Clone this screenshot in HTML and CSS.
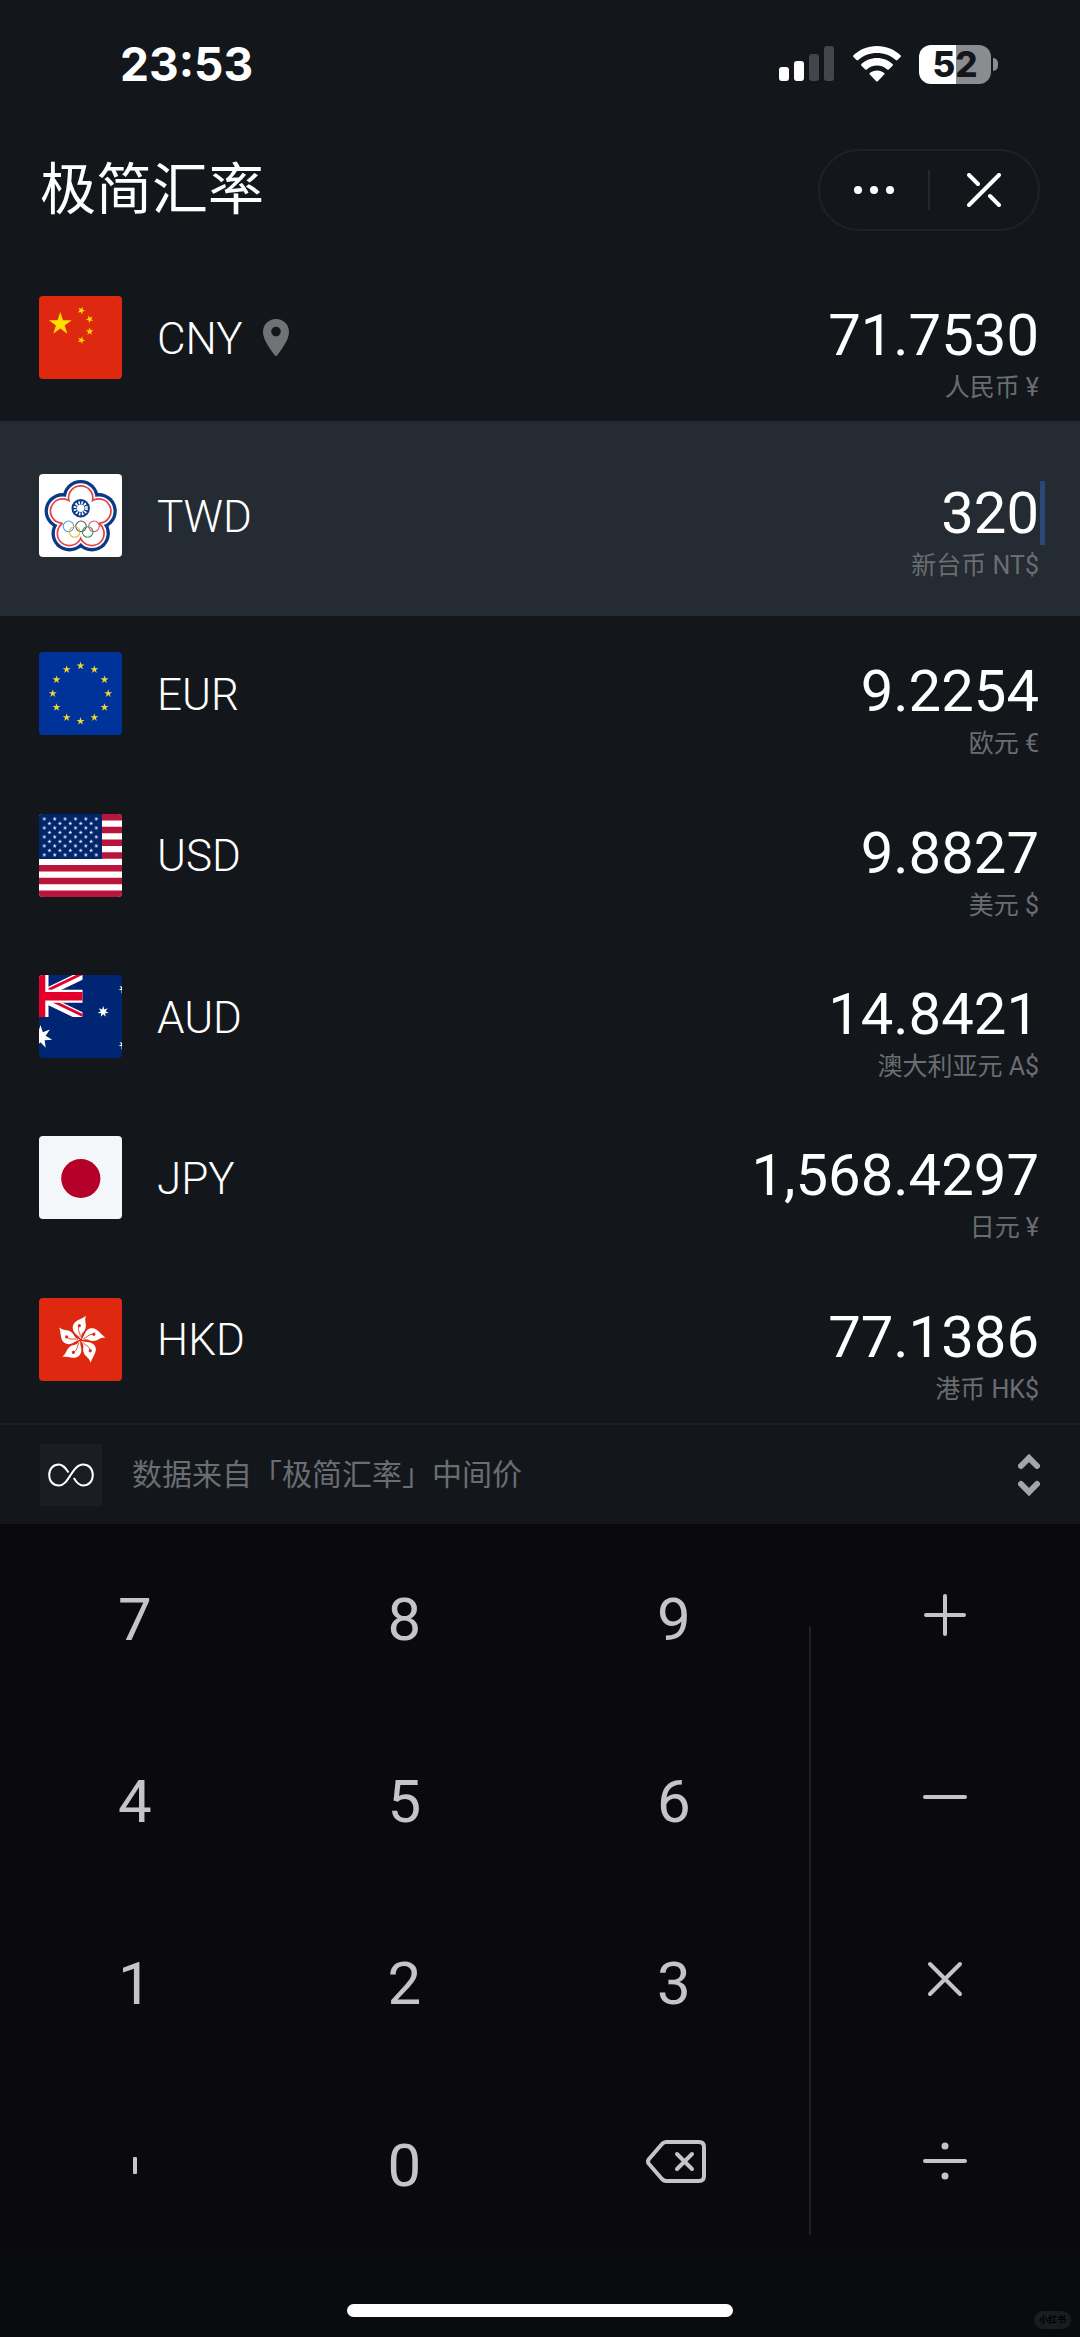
FILE: index.html
```html
<!DOCTYPE html>
<html lang="zh-CN">
<head>
<meta charset="utf-8">
<meta name="viewport" content="width=device-width, initial-scale=1">
<title>极简汇率</title>
<link rel="stylesheet" href="styles.css">
</head>
<body>
<svg class="defs" aria-hidden="true">
  <symbol id="star5" viewBox="-1 -1 2 2" overflow="visible"><path d="M0-1 .2245-.309 .951-.309 .363.118 .588.809 0 .382-.588.809-.363.118-.951-.309-.2245-.309Z"/></symbol>
  <symbol id="star7" viewBox="-1 -1 2 2" overflow="visible"><path d="M0-1 .191-.396 .782-.623 .429-.098 .975.223 .344.274 .434.901 0 .44-.434.901-.344.274-.975.223-.429-.098-.782-.623-.191-.396Z"/></symbol>
</svg>

<header class="top">
  <div class="status">
    <span class="clock">23:53</span>
    <div class="status-icons">
      <svg class="signal" viewBox="0 0 56 36" aria-label="信号"><g fill="#fff"><rect x="0" y="21" width="10" height="14" rx="3"/><rect x="15" y="15" width="10" height="20" rx="3"/></g><g fill="#43464a"><rect x="30" y="8" width="10" height="27" rx="3"/><rect x="45" y="0" width="10" height="35" rx="3"/></g></svg>
      <svg class="wifi" viewBox="0 0 48 36" aria-label="无线网络"><g fill="#fff"><path d="M24 0C14.800 0 6.400 3.600.500 9.300Q-.300 10.200.500 11.100L3.500 14.100Q4.300 14.900 5.200 14.100C10.200 9.600 16.800 7 24 7S37.800 9.600 42.800 14.100Q43.700 14.900 44.500 14.100L47.500 11.100Q48.300 10.200 47.500 9.300C41.600 3.600 33.200 0 24 0Z"/><path d="M24 12C18 12 12.500 14.300 8.400 18.100Q7.600 18.900 8.400 19.700L12.200 23.500Q13 24.200 13.800 23.500C16.500 21 20 19.500 24 19.500S31.500 21 34.200 23.500Q35 24.200 35.800 23.500L39.600 19.700Q40.400 18.900 39.600 18.100C35.500 14.300 30 12 24 12Z"/><path d="M24 24.500C21.200 24.500 18.700 25.500 16.800 27.100Q16 27.800 16.800 28.600L23.200 35.200Q24 36 24.800 35.200L31.200 28.600Q32 27.800 31.200 27.100C29.300 25.500 26.800 24.500 24 24.500Z"/></g></svg>
      <span class="battery"><span class="battery-body">52</span><span class="battery-cap"></span></span>
    </div>
  </div>
  <div class="titlebar">
    <h1>极简汇率</h1>
    <div class="capsule">
      <button type="button" aria-label="更多"><svg width="40" height="34" viewBox="0 0 40 34"><g fill="#fff"><circle cx="4" cy="17" r="4"/><circle cx="20" cy="17" r="4"/><circle cx="36" cy="17" r="4"/></g></svg></button>
      <span class="capsule-line"></span>
      <button type="button" aria-label="关闭"><svg width="34" height="34" viewBox="0 0 34 34"><path d="M2 32 32 2M2 2l9 9M23 23l9 9" fill="none" stroke="#fff" stroke-width="4" stroke-linecap="round"/></svg></button>
    </div>
  </div>
</header>

<main class="rates">
  <section class="row">
    <svg class="flag" viewBox="0 0 83 83"><rect width="83" height="83" fill="#de2910"/><g fill="#ffde00"><use href="#star5" x="9.300" y="16" width="24" height="24"/><use href="#star5" x="-4" y="-4" width="8" height="8" transform="translate(42.300 14.500) rotate(24)"/><use href="#star5" x="-4" y="-4" width="8" height="8" transform="translate(50.700 23.200) rotate(46)"/><use href="#star5" x="-4" y="-4" width="8" height="8" transform="translate(50.700 35.500) rotate(0)"/><use href="#star5" x="-4" y="-4" width="8" height="8" transform="translate(42.300 44.200) rotate(22)"/></g></svg>
    <span class="code">CNY</span>
    <svg class="pin" viewBox="0 0 26 37" aria-label="当前位置"><path fill="#707376" fill-rule="evenodd" d="M13 0C5.500 0 0 5.700 0 12.700C0 21 7 29.500 11.700 36.200Q13 37.800 14.300 36.200C19 29.500 26 21 26 12.700C26 5.700 20.500 0 13 0ZM13 7.800A4.800 4.800 0 1 1 13 17.400A4.800 4.800 0 1 1 13 7.800Z"/></svg>
    <div class="value"><span class="amount">71.7530</span><span class="unit">人民币 ¥</span></div>
  </section>

  <section class="row active">
    <svg class="flag" viewBox="0 0 83 83"><rect width="83" height="83" fill="#fff"/>
      <g fill="#0a3a86"><circle cx="41.700" cy="24" r="18"/><circle cx="59.800" cy="37.100" r="18"/><circle cx="52.900" cy="59.400" r="18"/><circle cx="30.500" cy="59.400" r="18"/><circle cx="23.600" cy="37.100" r="18"/></g>
      <g fill="#fff"><circle cx="41.700" cy="24" r="14.700"/><circle cx="59.800" cy="37.100" r="14.700"/><circle cx="52.900" cy="59.400" r="14.700"/><circle cx="30.500" cy="59.400" r="14.700"/><circle cx="23.600" cy="37.100" r="14.700"/></g>
      <g fill="#e04046"><circle cx="41.700" cy="24" r="13"/><circle cx="59.800" cy="37.100" r="13"/><circle cx="52.900" cy="59.400" r="13"/><circle cx="30.500" cy="59.400" r="13"/><circle cx="23.600" cy="37.100" r="13"/></g>
      <g fill="#fff"><circle cx="41.700" cy="24" r="11.300"/><circle cx="59.800" cy="37.100" r="11.300"/><circle cx="52.900" cy="59.400" r="11.300"/><circle cx="30.500" cy="59.400" r="11.300"/><circle cx="23.600" cy="37.100" r="11.300"/><circle cx="41.700" cy="43.500" r="19"/></g>
      <circle cx="41.700" cy="34.300" r="9.200" fill="#0a3a86"/><circle cx="41.700" cy="34.300" r="3.700" fill="#fff"/><circle cx="41.700" cy="34.300" r="5.700" fill="none" stroke="#fff" stroke-width="3" stroke-dasharray="1.600 1.384"/>
      <g fill="none" stroke-width="1.100"><circle cx="29.500" cy="52.300" r="5.300" stroke="#4aa3d8"/><circle cx="42" cy="52.300" r="5.300" stroke="#555"/><circle cx="55" cy="52.300" r="5.300" stroke="#e04a6c"/><circle cx="35.700" cy="58" r="5.300" stroke="#e8b93a"/><circle cx="48.700" cy="58" r="5.300" stroke="#3a9a5b"/></g>
    </svg>
    <label class="code" for="twd">TWD</label>
    <div class="value"><span class="entry"><input class="amount" id="twd" type="text" inputmode="decimal" value="320"><span class="caret"></span></span><span class="unit">新台币 NT$</span></div>
  </section>

  <section class="row">
    <svg class="flag" viewBox="-41.500 -41.500 83 83"><rect x="-42" y="-42" width="84" height="84" fill="#039"/><g fill="#f3d32f"><use href="#star5" x="-4.200" y="-31.900" width="8.400" height="8.400"/><use href="#star5" x="9.650" y="-28.200" width="8.400" height="8.400"/><use href="#star5" x="19.800" y="-18.050" width="8.400" height="8.400"/><use href="#star5" x="23.500" y="-4.200" width="8.400" height="8.400"/><use href="#star5" x="19.800" y="9.650" width="8.400" height="8.400"/><use href="#star5" x="9.650" y="19.800" width="8.400" height="8.400"/><use href="#star5" x="-4.200" y="23.500" width="8.400" height="8.400"/><use href="#star5" x="-18.050" y="19.800" width="8.400" height="8.400"/><use href="#star5" x="-28.200" y="9.650" width="8.400" height="8.400"/><use href="#star5" x="-31.900" y="-4.200" width="8.400" height="8.400"/><use href="#star5" x="-28.200" y="-18.050" width="8.400" height="8.400"/><use href="#star5" x="-18.050" y="-28.200" width="8.400" height="8.400"/></g></svg>
    <span class="code">EUR</span>
    <div class="value"><span class="amount">9.2254</span><span class="unit">欧元 €</span></div>
  </section>

  <section class="row">
    <svg class="flag" viewBox="0 0 83 83"><defs><pattern id="us-stars" x="2.700" y="2.750" width="10.400" height="9" patternUnits="userSpaceOnUse"><g fill="#fff"><use href="#star5" x=".400" y="0" width="4.400" height="4.400"/><use href="#star5" x="5.600" y="4.500" width="4.400" height="4.400"/></g></pattern></defs><rect width="83" height="83" fill="#fff"/><path d="M0 3.200H83M0 16H83M0 28.700H83M0 41.500H83M0 54.300H83M0 67H83M0 79.800H83" stroke="#b8143c" stroke-width="6.400"/><rect width="63" height="45" fill="#00256b"/><rect x="2.700" y="2.750" width="57.200" height="40.500" fill="url(#us-stars)"/></svg>
    <span class="code">USD</span>
    <div class="value"><span class="amount">9.8827</span><span class="unit">美元 $</span></div>
  </section>

  <section class="row">
    <svg class="flag" viewBox="0 0 83 83"><defs><clipPath id="jack"><rect width="43.500" height="42"/></clipPath></defs><rect width="83" height="83" fill="#002673"/><g clip-path="url(#jack)"><path d="M0 21 46-1.200M0 21 46 43.200" stroke="#fff" stroke-width="8.400"/><path d="M0 19.400 46-2.800M0 19.400 46 41.600" stroke="#e4002b" stroke-width="2.800"/><path d="M0 21.300H44M3 0V42" stroke="#fff" stroke-width="13"/><path d="M0 21.300H44" stroke="#e4002b" stroke-width="8.400"/><path d="M3 0V42" stroke="#e4002b" stroke-width="6.600"/></g><g fill="#fff"><use href="#star7" x="-10.500" y="50" width="24" height="24"/><use href="#star7" x="58.500" y="31" width="11.400" height="11.400"/><use href="#star7" x="79.500" y="9" width="10" height="10"/><use href="#star7" x="79.500" y="65" width="10" height="10"/></g></svg>
    <span class="code">AUD</span>
    <div class="value"><span class="amount">14.8421</span><span class="unit">澳大利亚元 A$</span></div>
  </section>

  <section class="row">
    <svg class="flag" viewBox="0 0 83 83"><rect width="83" height="83" fill="#f4f7fa"/><circle cx="41.800" cy="42.500" r="19.600" fill="#b5002a"/></svg>
    <span class="code">JPY</span>
    <div class="value"><span class="amount">1,568.4297</span><span class="unit">日元 ¥</span></div>
  </section>

  <section class="row">
    <svg class="flag" viewBox="0 0 83 83"><defs><g id="petal"><path fill="#fff" d="M-.500-1.500C-2.500-5-8.500-7-8-13C-7.300-19.500-.500-20 5.300-24.300C3.200-19 6.300-16.500 4.800-11.500C3.500-7.500-.300-7 .500-1.500Z"/><path d="M-.500-3C0-7-3.500-9-1.700-13.500" fill="none" stroke="#de2910" stroke-width=".800"/><circle cx="-1.400" cy="-14.300" r="1.600" fill="#de2910"/></g></defs><rect width="83" height="83" fill="#de2910"/><g transform="translate(41.700 42)"><use href="#petal"/><use href="#petal" transform="rotate(72)"/><use href="#petal" transform="rotate(144)"/><use href="#petal" transform="rotate(216)"/><use href="#petal" transform="rotate(288)"/></g></svg>
    <span class="code">HKD</span>
    <div class="value"><span class="amount">77.1386</span><span class="unit">港币 HK$</span></div>
  </section>
</main>

<div class="source">
  <span class="logo"><svg width="46" height="24" viewBox="0 0 46 24"><path d="M20.500 9.500C17.500 5 15 1.500 11 1.500C5 1.500 1.200 6 1.200 12S5 22.500 11 22.500C21 22.500 24 1.500 35 1.500C41 1.500 44.800 6 44.800 12S41 22.500 35 22.500C31 22.500 28.500 19.500 25.800 15" fill="none" stroke="#fff" stroke-width="2"/></svg></span>
  <p>数据来自「极简汇率」中间价</p>
  <button type="button" class="toggle" aria-label="切换数据来源"><svg width="22" height="42" viewBox="0 0 22 42"><path d="M3 12l8-8 8 8M3 30l8 8 8-8" fill="none" stroke="#a3a6aa" stroke-width="6" stroke-linecap="round" stroke-linejoin="miter"/></svg></button>
</div>

<div class="keypad">
  <div class="digits">
    <button type="button">7</button><button type="button">8</button><button type="button">9</button>
    <button type="button">4</button><button type="button">5</button><button type="button">6</button>
    <button type="button">1</button><button type="button">2</button><button type="button">3</button>
    <button type="button" aria-label="小数点"><svg width="4" height="17" viewBox="0 0 4 17"><rect width="4" height="17" rx="1" fill="#c5c4c9"/></svg></button><button type="button">0</button>
    <button type="button" class="erase" aria-label="删除"><svg width="60" height="43" viewBox="0 0 60 43"><g fill="none" stroke="#c5c4c9" stroke-width="4" stroke-linecap="round" stroke-linejoin="round"><path d="M20 2H53Q58 2 58 7V36Q58 41 53 41H20Q18 41 16 39L3 24Q1 21.500 3 19L16 4Q18 2 20 2Z"/><path d="M31 14 46 29M46 14 31 29"/></g></svg></button>
  </div>
  <div class="divider"></div>
  <div class="ops">
    <button type="button" aria-label="加"><svg width="46" height="46" viewBox="0 0 46 46"><path d="M4 23H42M23 4V42"/></svg></button>
    <button type="button" aria-label="减"><svg width="46" height="46" viewBox="0 0 46 46"><path d="M3 23H43"/></svg></button>
    <button type="button" aria-label="乘"><svg width="46" height="46" viewBox="0 0 46 46"><path d="M8 8 38 38M38 8 8 38"/></svg></button>
    <button type="button" aria-label="除"><svg width="46" height="46" viewBox="0 0 46 46"><path d="M3 23H43"/><circle cx="23" cy="8" r="3.500"/><circle cx="23" cy="38" r="3.500"/></svg></button>
  </div>
</div>
<footer class="home"><span class="home-bar"></span><span class="badge">小红书</span></footer>
</body>
</html>
```
FILE: styles.css
```css
* { box-sizing: border-box; margin: 0; }

body {
  min-height: 100vh;
  display: flex;
  flex-direction: column;
  background: #13171b;
  color: #fff;
  font-family: Roboto, "Noto Sans CJK SC", sans-serif;
  font-weight: 400;
}

button {
  padding: 0;
  border: 0;
  background: none;
  color: inherit;
  font: inherit;
  display: flex;
  align-items: center;
  justify-content: center;
}

svg { display: block; flex: none; }

.defs { position: absolute; width: 0; height: 0; }

/* Status bar and title */
.status {
  display: flex;
  align-items: center;
  justify-content: space-between;
  height: 128px;
  padding: 0 82px 0 120px;
}

.clock { font: 700 46px/60px Inter, sans-serif; }

.status-icons { display: flex; align-items: center; gap: 18px; }

.signal { width: 56px; height: 36px; }
.wifi { width: 48px; height: 36px; }

.battery { display: flex; align-items: center; gap: 2px; }

.battery-body {
  width: 72px;
  height: 39px;
  border-radius: 12px;
  background: linear-gradient(90deg, #fff 52%, #8b8c8f 52%);
  color: #13171b;
  font: 800 35px/39px Inter, sans-serif;
  text-align: center;
}

.battery-cap {
  width: 5px;
  height: 13px;
  border-radius: 0 6px 6px 0;
  background: #8b8c8f;
}

.titlebar {
  display: flex;
  align-items: center;
  justify-content: space-between;
  height: 132px;
  padding: 0 40px 8px;
}

h1 { margin-bottom: 10px; font: 400 56px/80px "Noto Sans CJK SC", sans-serif; }

.capsule {
  display: flex;
  align-items: center;
  width: 222px;
  height: 82px;
  border: 2px solid #1e2226;
  border-radius: 41px;
}

.capsule button { flex: 1; height: 100%; }
.capsule-line { width: 2px; height: 40px; background: #25292d; }

/* Currency list */
.rates { flex: 1; display: flex; flex-direction: column; }

.row {
  flex: 1 0 150px;
  display: flex;
  align-items: center;
  padding: 0 41px 0 39px;
}

.row.active { flex: 0 0 195px; background: #252b33; }

.flag {
  width: 83px;
  height: 83px;
  margin-bottom: 6px;
  border-radius: 4px;
}

.code {
  margin: 0 0 4px 35px;
  font-size: 44px;
  font-weight: 300;
  line-height: 60px;
}

.pin { width: 26px; height: 37px; margin: 0 0 6px 20px; }

.value {
  flex: 1;
  padding-top: 27px;
  display: flex;
  flex-direction: column;
  align-items: flex-end;
  gap: 8px;
}

.amount {
  display: block;
  font-size: 58px;
  line-height: 60px;
}

.entry { position: relative; display: block; }

input.amount {
  width: 300px;
  height: 60px;
  padding: 0;
  border: 0;
  outline: 0;
  background: none;
  color: inherit;
  font-family: inherit;
  font-weight: inherit;
  text-align: right;
}

.caret {
  position: absolute;
  right: -6px;
  top: -2px;
  width: 5px;
  height: 64px;
  background: #2c4677;
}

.unit { font-size: 25px; line-height: 30px; color: #6a6d71; }

/* Data source bar */
.source {
  display: flex;
  align-items: center;
  height: 101px;
  padding: 0 40px;
  border-top: 2px solid #1b1f24;
}

.logo {
  display: flex;
  align-items: center;
  justify-content: center;
  width: 62px;
  height: 62px;
  background: #1a1e23;
}

.source p { flex: 1; margin-left: 30px; font-size: 30px; line-height: 40px; color: #6a6d71; }

.toggle { width: 22px; height: 60px; }

/* Keypad */
.keypad {
  display: flex;
  height: 728px;
  background: #0a0a0e;
  color: #c5c4c9;
  font-size: 60px;
}

.digits {
  flex: 3;
  display: grid;
  grid-template-columns: repeat(3, 1fr);
  grid-auto-rows: 1fr;
}

.digits button { padding-top: 8px; }
.digits .erase { padding: 0 0 0 5px; }

.divider { width: 2px; margin: 102px 0 17px; background: #202125; }

.ops { flex: 1; display: grid; grid-auto-rows: 1fr; }

.ops path { fill: none; stroke: #c5c4c9; stroke-width: 4; stroke-linecap: round; }
.ops circle { fill: #c5c4c9; }

.home {
  position: relative;
  display: flex;
  justify-content: center;
  align-items: flex-end;
  height: 85px;
  padding-bottom: 20px;
  background: #0a0b0e;
}

.home-bar { width: 386px; height: 13px; border-radius: 7px; background: #fff; }

.badge {
  position: absolute;
  right: 9px;
  bottom: 8px;
  width: 37px;
  height: 18px;
  border-radius: 9px;
  background: #1b1c1f;
  color: #000;
  font-size: 9px;
  font-weight: 700;
  line-height: 18px;
  text-align: center;
}
```
